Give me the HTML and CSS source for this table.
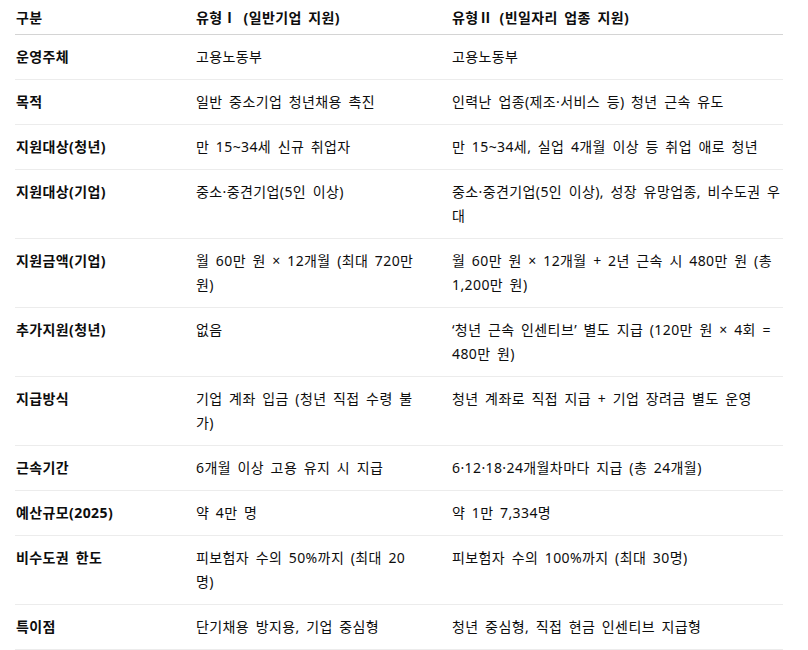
FILE: index.html
```html
<!DOCTYPE html>
<html lang="ko">
<head>
<meta charset="utf-8">
<link rel="stylesheet" href="styles.css">
</head>
<body>
<table class="cmp">
  <colgroup>
    <col class="c1">
    <col class="c2">
    <col class="c3">
  </colgroup>
  <thead>
    <tr><th>구분</th><th>유형Ⅰ (일반기업 지원)</th><th>유형Ⅱ (빈일자리 업종 지원)</th></tr>
  </thead>
  <tbody>
    <tr><td>운영주체</td><td>고용노동부</td><td>고용노동부</td></tr>
    <tr><td>목적</td><td>일반 중소기업 청년채용 촉진</td><td>인력난 업종(제조·서비스 등) 청년 근속 유도</td></tr>
    <tr><td>지원대상(청년)</td><td>만 15~34세 신규 취업자</td><td>만 15~34세, 실업 4개월 이상 등 취업 애로 청년</td></tr>
    <tr><td>지원대상(기업)</td><td>중소·중견기업(5인 이상)</td><td>중소·중견기업(5인 이상), 성장 유망업종, 비수도권 우대</td></tr>
    <tr><td>지원금액(기업)</td><td>월 60만 원 × 12개월 (최대 720만 원)</td><td>월 60만 원 × 12개월 + 2년 근속 시 480만 원 (총 1,200만 원)</td></tr>
    <tr><td>추가지원(청년)</td><td>없음</td><td>‘청년 근속 인센티브’ 별도 지급 (120만 원 × 4회 = 480만 원)</td></tr>
    <tr><td>지급방식</td><td>기업 계좌 입금 (청년 직접 수령 불가)</td><td>청년 계좌로 직접 지급 + 기업 장려금 별도 운영</td></tr>
    <tr><td>근속기간</td><td>6개월 이상 고용 유지 시 지급</td><td>6·12·18·24개월차마다 지급 (총 24개월)</td></tr>
    <tr><td>예산규모(2025)</td><td>약 4만 명</td><td>약 1만 7,334명</td></tr>
    <tr><td>비수도권 한도</td><td>피보험자 수의 50%까지 (최대 20명)</td><td>피보험자 수의 100%까지 (최대 30명)</td></tr>
    <tr><td>특이점</td><td>단기채용 방지용, 기업 중심형</td><td>청년 중심형, 직접 현금 인센티브 지급형</td></tr>
  </tbody>
</table>
</body>
</html>
```
FILE: styles.css
```css
html, body {
  margin: 0;
  padding: 0;
  background: #ffffff;
}
body {
  padding: 0 25px 0 15px;
  font-family: "Noto Sans", "Noto Sans CJK KR", sans-serif;
  font-size: 14px;
  letter-spacing: 0.4px;
  word-spacing: 2.5px;
  color: #0d0d0d;
}
.cmp {
  width: 768px;
  border-collapse: collapse;
  table-layout: fixed;
}
.c1 { width: 180px; }
.c2 { width: 256px; }
.c3 { width: 332px; }
.cmp th,
.cmp td {
  text-align: left;
  vertical-align: top;
  line-height: 24px;
  padding: 10px 30px 10px 1px;
}
.cmp th:last-child,
.cmp td:last-child {
  padding-right: 2px;
}
.cmp th {
  font-weight: 700;
  padding-top: 6px;
  padding-bottom: 4px;
  border-bottom: 1px solid #d4d4d4;
}
.cmp td {
  border-bottom: 1px solid #ececec;
}
.cmp td:first-child {
  font-weight: 700;
}
```
